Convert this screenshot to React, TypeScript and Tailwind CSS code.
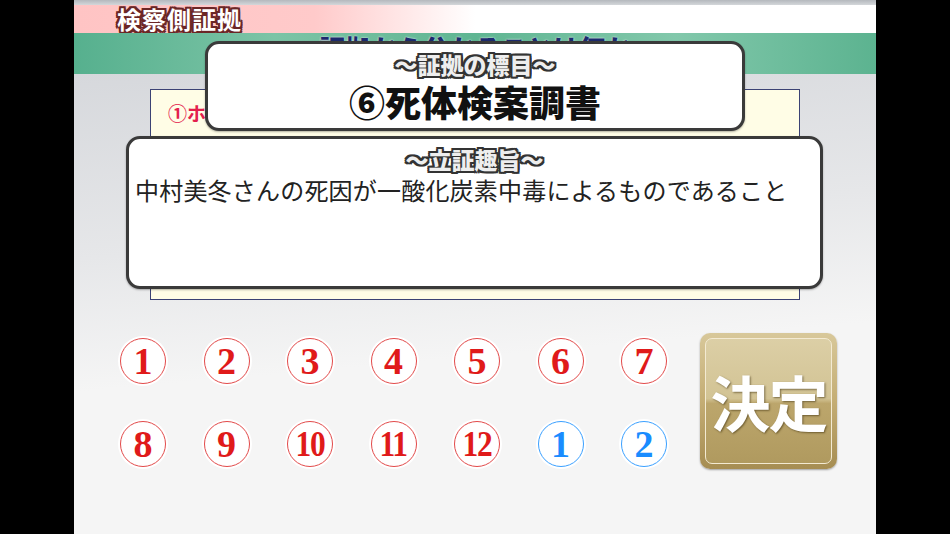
import React from 'react';

const outlineDark =
  '[text-shadow:-2px_-2px_0_#333,2px_-2px_0_#333,-2px_2px_0_#333,2px_2px_0_#333,0_-2px_0_#333,0_2px_0_#333,-2px_0_0_#333,2px_0_0_#333]';

const NumberBadge: React.FC<{ label: string; blue?: boolean }> = ({ label, blue }) => {
  const wide = label.length > 1;
  return (
    <div
      className={`w-[46px] h-[46px] rounded-full bg-white flex items-center justify-center shadow-[0_0_0_2px_#ffffff] border-[1.5px] ${
        blue ? 'border-[#3aa0ff] text-[#1a8cff]' : 'border-[#e24a4a] text-[#e01a1a]'
      }`}
    >
      <span
        className={`inline-block font-bold leading-none ${
          wide ? 'text-[35px] tracking-[-1.5px] scale-x-[0.9]' : 'text-[38px]'
        }`}
        style={{ fontFamily: '"Liberation Serif", "DejaVu Serif", serif' }}
      >
        {label}
      </span>
    </div>
  );
};

const App: React.FC = () => {
  const reds = ['1', '2', '3', '4', '5', '6', '7', '8', '9', '10', '11', '12'];
  const jp = { fontFamily: '"Noto Sans CJK JP", "Noto Sans", sans-serif' };

  return (
    <div className="w-[950px] h-[534px] bg-black flex overflow-hidden" style={jp}>
      <div className="ml-[74px] w-[802px] h-full relative flex flex-col bg-[#f5f5f5] overflow-hidden">
        {/* title strip */}
        <div className="h-[5px] bg-gradient-to-b from-[#b4b8bd] to-[#d4d7da]" />
        <div className="h-[28px] bg-[linear-gradient(90deg,#ffc4c4_0%,#ffcaca_30%,#ffffff_50%,#ffffff_100%)] flex items-center pl-[43px]">
          <span
            className="text-[24px] font-bold text-white leading-none tracking-[1px] [text-shadow:-2px_-2px_0_#6b2626,2px_-2px_0_#6b2626,-2px_2px_0_#6b2626,2px_2px_0_#6b2626,0_-2px_0_#6b2626,0_2px_0_#6b2626,-2px_0_0_#6b2626,2px_0_0_#6b2626]"
          >
            検察側証拠
          </span>
        </div>
        {/* green banner, question text sits behind the overlay card */}
        <div className="h-[41px] bg-[linear-gradient(90deg,#56b08e_0%,#7cc4a6_25%,#5fb592_50%,#82c8ab_75%,#5cb390_100%)] flex justify-center">
          <div className="h-[8px] overflow-hidden">
            <div className="mt-[2px] text-[26px] font-black leading-none text-[#1c2a6e] [text-shadow:0_0_2px_#ffffff]">
              証拠から分かることは何か
            </div>
          </div>
        </div>

        {/* evidence list panel */}
        <div className="flex-1 bg-[linear-gradient(175deg,#d6d8dc_0%,#e6e7e9_35%,#f5f5f5_60%,#f5f5f5_100%)] flex flex-col">
          <div className="mt-[15px] ml-[76px] w-[650px] h-[211px] bg-[#fffde6] border border-[#3b4274] pt-[12px] pl-[17px]">
            <span className="text-[19px] font-bold leading-none text-[#e3204c]">①ホ</span>
          </div>

          {/* choice buttons */}
          <div className="mt-[33px] ml-[46px] flex items-start gap-[33px]">
            <div className="grid grid-cols-7 gap-x-[37.5px] gap-y-[37px] mt-[5px]">
              {reds.map((n) => (
                <NumberBadge key={n} label={n} />
              ))}
              <NumberBadge label="1" blue />
              <NumberBadge label="2" blue />
            </div>
            <button className="w-[137px] h-[136px] rounded-[10px] p-[5px] bg-[linear-gradient(180deg,#d8c89a_0%,#c4ad74_50%,#a68d52_100%)] shadow-[0_1px_2px_rgba(0,0,0,0.35)]">
              <div className="w-full h-full rounded-[7px] border-[1.5px] border-[#f3ead2] bg-[linear-gradient(180deg,#dccfa6_0%,#d2c394_48%,#bca66c_52%,#b09a5f_100%)] flex items-center justify-center">
                <span className="text-[60px] font-bold text-white leading-none tracking-[-2px] [text-shadow:1px_1px_2px_rgba(60,45,10,0.6)]">
                  決定
                </span>
              </div>
            </button>
          </div>
        </div>

        {/* overlay: evidence title */}
        <div className="absolute left-[131px] top-[41px] w-[540px] h-[90px] bg-white border-[3px] border-[#3a3a3a] rounded-[14px] flex flex-col items-center shadow-[0_1px_2px_rgba(0,0,0,0.3)]">
          <div className={`mt-[9px] h-[23px] text-[23px] font-black leading-none text-[#eeeeee] ${outlineDark}`}>
            〜証拠の標目〜
          </div>
          <div className="mt-[7px] h-[36px] text-[36px] font-black leading-none text-[#111111]">
            ⑥死体検案調書
          </div>
        </div>

        {/* overlay: purpose of proof */}
        <div className="absolute left-[52px] top-[136px] w-[697px] h-[153px] bg-white border-[3px] border-[#3a3a3a] rounded-[14px] flex flex-col shadow-[0_1px_2px_rgba(0,0,0,0.3)]">
          <div className={`self-center mt-[9px] h-[23px] text-[23px] font-black leading-none text-[#eeeeee] ${outlineDark}`}>
            〜立証趣旨〜
          </div>
          <div className="ml-[6px] mt-[7px] text-[24px] leading-none text-[#222222] tracking-[0.2px]">
            中村美冬さんの死因が一酸化炭素中毒によるものであること
          </div>
        </div>
      </div>
    </div>
  );
};

export default App;
